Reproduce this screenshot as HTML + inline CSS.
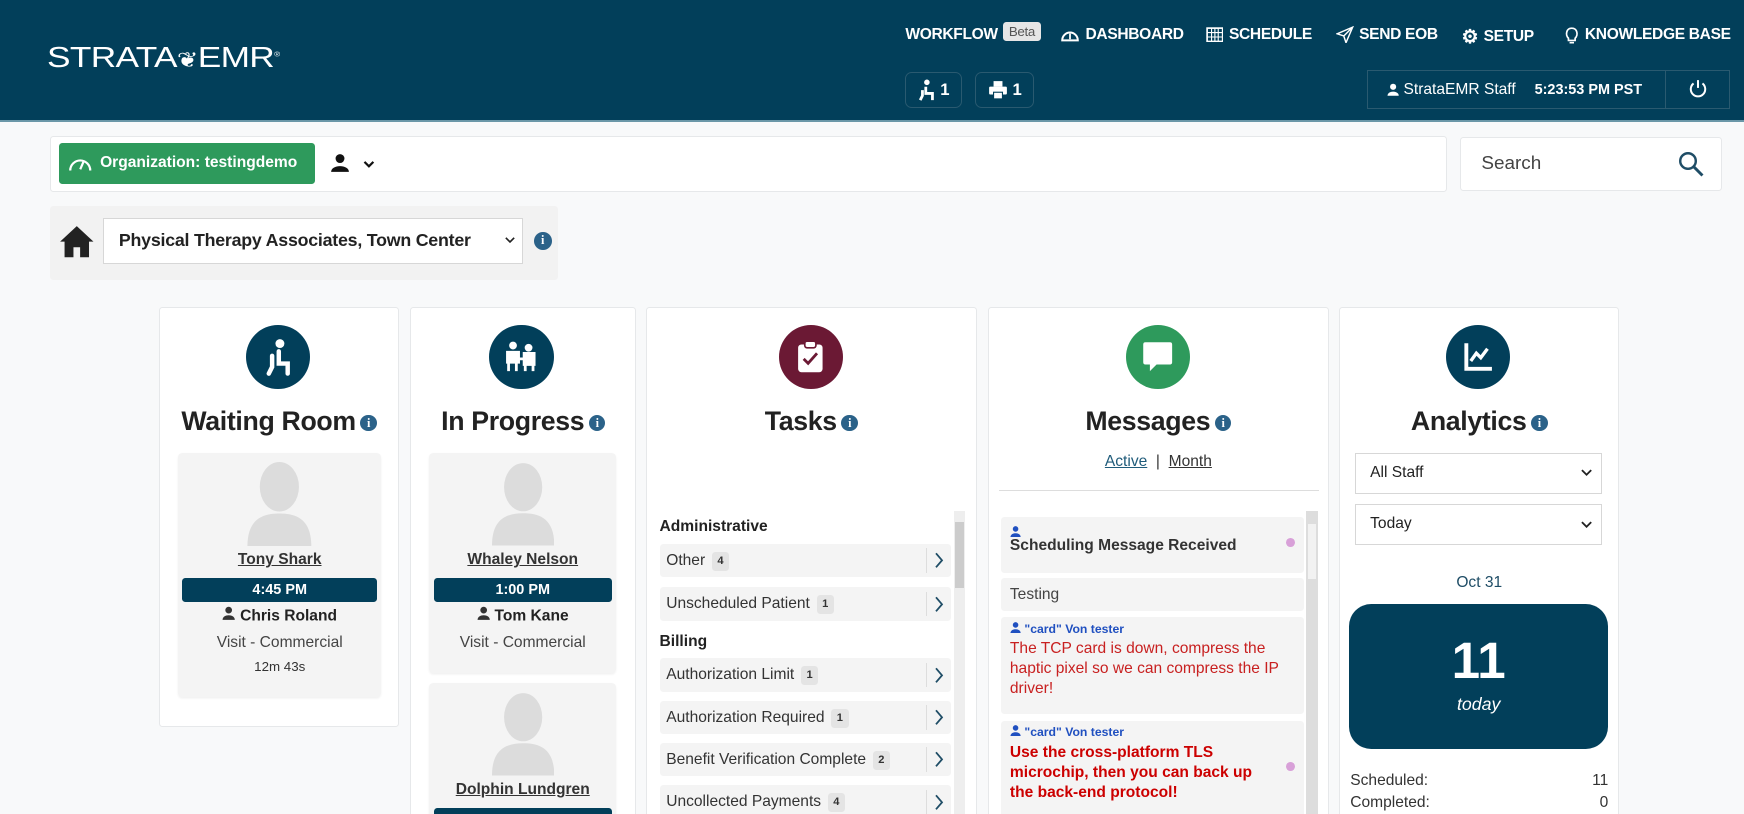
<!DOCTYPE html>
<html><head><meta charset="utf-8">
<style>
*{box-sizing:border-box;margin:0;padding:0}
html,body{width:1744px;height:814px;overflow:hidden}
body{background:#f8f9fa;font-family:"Liberation Sans",Arial,sans-serif;color:#222}
#root{zoom:1.11224;width:1568px;height:732px;position:relative;overflow:hidden}
.abs{position:absolute}
.hdr{left:0;top:0;width:1568px;height:110px;background:#023f5a;border-bottom:2px solid #6a97a8}
.nav{top:23px;color:#fff;font-weight:bold;font-size:14px;display:flex;align-items:center;gap:5px;letter-spacing:-0.3px}
.beta{background:#e6e6e6;color:#555;font-weight:normal;font-size:12px;padding:2px 5px;border-radius:3px;margin-top:-6px}
.hbtn{top:65px;height:32px;border:1px solid #2a5a70;border-radius:6px;color:#fff;font-weight:bold;font-size:15px;display:flex;align-items:center;justify-content:center;gap:4px}
.card{background:#fff;border:1px solid #e6e8ea;border-radius:3px}
.circle{width:58px;height:58px;border-radius:50%;display:flex;align-items:center;justify-content:center}
.title{font-size:24px;font-weight:bold;color:#222;text-align:center;letter-spacing:-0.3px}
.info{display:inline-block;width:15px;height:15px;border-radius:50%;background:#2b6289;color:#fff;font-size:11px;font-weight:bold;text-align:center;line-height:15px;font-family:"Liberation Serif",serif;vertical-align:3px;margin-left:4px}
.pcard{background:#f4f4f4;border-radius:4px;text-align:center;box-shadow:0 1px 2px rgba(0,0,0,.06)}
.pname{font-size:14px;font-weight:bold;color:#333;text-decoration:underline}
.tbar{background:#023f5a;color:#fff;font-weight:bold;font-size:13px;border-radius:3px;height:22px;line-height:22px}
.row{position:absolute;left:593px;width:262px;height:30px;background:#f4f4f4;border-radius:3px;font-size:14px;color:#333;line-height:30px;padding-left:6px}
.badge{display:inline-block;background:#e4e4e4;font-size:10px;font-weight:bold;padding:0 5px;line-height:17px;border-radius:3px;margin-left:6px;vertical-align:1px}
.chev{position:absolute;right:0;top:4px;height:22px;width:22px;border-left:1px solid #ddd;display:flex;align-items:center;justify-content:center}
.sel{background:#fff;border:1px solid #d7d7d7;font-size:14px;color:#222;padding-left:13px;display:flex;align-items:center}
.msg{position:absolute;left:900px;width:272px;background:#f4f4f4;border-radius:3px;padding:4px 8px;font-size:13px}
</style></head><body><div id="root">
<svg width="0" height="0" style="position:absolute"><defs>
<symbol id="chv" viewBox="0 0 10 16"><path d="M2 1 L8 8 L2 15" fill="none" stroke="#1f4d66" stroke-width="1.8"/></symbol>
<symbol id="dn" viewBox="0 0 12 8"><path d="M1 1 L6 6 L11 1" fill="none" stroke="#222" stroke-width="2"/></symbol>
<symbol id="usr" viewBox="0 0 12 12"><circle cx="6" cy="3.2" r="3" /><path d="M0.5 12 C0.5 6.5 11.5 6.5 11.5 12 Z"/></symbol>
</defs></svg>

<div class="abs hdr"></div>
<div class="abs" style="left:42px;top:38px;color:#fff;font-size:26px;letter-spacing:-0.5px;font-weight:normal;transform:scaleX(1.22);transform-origin:left">STRATA<span style="font-size:19px">❦</span>EMR<sup style="font-size:6px">®</sup></div>

<div class="abs nav" style="left:814px">WORKFLOW <span class="beta">Beta</span></div>
<div class="abs nav" style="left:953px"><svg width="18" height="14" viewBox="0 0 18 14"><path d="M2 12 A7 7 0 1 1 16 12 Z" fill="none" stroke="#fff" stroke-width="1.8"/><path d="M9 11 L9 6" stroke="#fff" stroke-width="1.6"/></svg>DASHBOARD</div>
<div class="abs nav" style="left:1084px"><svg width="16" height="14" viewBox="0 0 16 14"><rect x="1" y="1" width="14" height="12" fill="none" stroke="#fff" stroke-width="1.5"/><path d="M1 5H15M1 9H15M5 1V13M8 1V13M11 1V13" stroke="#fff" stroke-width="1"/></svg>SCHEDULE</div>
<div class="abs nav" style="left:1201px"><svg width="16" height="16" viewBox="0 0 16 16"><path d="M15 1 L1 7 L7 9 L9 15 Z M15 1 L7 9" fill="none" stroke="#fff" stroke-width="1.3"/></svg>SEND EOB</div>
<div class="abs nav" style="left:1314px"><span style="font-size:17px">⚙</span>SETUP</div>
<div class="abs nav" style="left:1406px"><svg width="14" height="17" viewBox="0 0 14 17"><path d="M4 11 C1 8 2 2 7 2 C12 2 13 8 10 11 L10 13 L4 13 Z M5 15 H9" fill="none" stroke="#fff" stroke-width="1.5"/></svg>KNOWLEDGE BASE</div>

<div class="abs hbtn" style="left:814px;width:51px"><svg width="16" height="20" viewBox="0 0 16 20"><circle cx="8" cy="3" r="2.5" fill="#fff"/><path d="M7 7 V13 H13 V19 M4 10 V15 L2 19" fill="none" stroke="#fff" stroke-width="2.5"/></svg>1</div>
<div class="abs hbtn" style="left:877px;width:53px"><svg width="18" height="18" viewBox="0 0 18 18"><rect x="5" y="1" width="8" height="5" fill="#fff"/><rect x="1" y="6" width="16" height="7" rx="1" fill="#fff"/><rect x="5" y="11" width="8" height="6" fill="#fff" stroke="#023f5a"/></svg>1</div>
<div class="abs" style="left:1229px;top:63px;width:326px;height:35px;border:1px solid #2a5a70;display:flex;align-items:center;color:#fff;font-size:14px">
<svg style="margin-left:17px;margin-right:4px" width="11" height="12" fill="#fff"><use href="#usr"/></svg>StrataEMR Staff<b style="margin-left:17px;font-size:13px">5:23:53 PM PST</b>
<div style="position:absolute;left:267px;top:0;height:33px;border-left:1px solid #2a5a70;width:58px;display:flex;align-items:center;justify-content:center"><svg width="18" height="18" viewBox="0 0 18 18"><path d="M5 4 A6.5 6.5 0 1 0 13 4" fill="none" stroke="#fff" stroke-width="1.8"/><path d="M9 1 V8" stroke="#fff" stroke-width="1.8"/></svg></div></div>

<div class="abs card" style="left:45px;top:122px;width:1256px;height:51px"></div>
<div class="abs" style="left:53px;top:129px;width:230px;height:36px;background:#2e9a5c;border-radius:3px;color:#fff;font-weight:bold;font-size:14px;display:flex;align-items:center;padding-left:8px;gap:7px"><svg width="22" height="14" viewBox="0 0 22 14"><path d="M2 13 A9 9 0 0 1 20 13" fill="none" stroke="#fff" stroke-width="2"/><path d="M11 12 L14 5" stroke="#fff" stroke-width="2"/></svg>Organization: testingdemo</div>
<div class="abs" style="left:297px;top:138px"><svg width="46" height="18" viewBox="0 0 46 18"><circle cx="9" cy="5" r="4" fill="#111"/><path d="M1 17 C1 10 17 10 17 17 Z" fill="#111"/><path d="M31 8 L35 12 L39 8" fill="none" stroke="#111" stroke-width="2"/></svg></div>
<div class="abs card" style="left:1313px;top:123px;width:235px;height:49px;display:flex;align-items:center;padding-left:18px;font-size:17px;color:#444">Search
<svg style="position:absolute;right:14px;top:12px" width="24" height="24" viewBox="0 0 24 24"><circle cx="9" cy="9" r="7" fill="none" stroke="#1f4d66" stroke-width="2.2"/><path d="M14 14 L22 22" stroke="#1f4d66" stroke-width="2.6"/></svg></div>

<div class="abs" style="left:45px;top:185px;width:457px;height:67px;background:#f2f2f2;border-radius:3px"></div>
<div class="abs" style="left:53px;top:202px"><svg width="32" height="30" viewBox="0 0 32 30"><path d="M16 1 L31 15 H27 V29 H19 V20 H13 V29 H5 V15 H1 Z" fill="#222"/></svg></div>
<div class="abs sel" style="left:93px;top:196px;width:377px;height:41px;font-weight:bold;font-size:16px;letter-spacing:-0.2px">Physical Therapy Associates, Town Center<svg style="position:absolute;right:6px" width="9" height="6"><use href="#dn"/></svg></div>
<div class="abs" style="left:476px;top:208px"><span class="info" style="width:16px;height:16px">i</span></div>

<!-- columns -->
<div class="abs card" style="left:143px;top:276px;width:216px;height:378px"></div>
<div class="abs card" style="left:369px;top:276px;width:203px;height:470px"></div>
<div class="abs card" style="left:581px;top:276px;width:297px;height:470px"></div>
<div class="abs card" style="left:888px;top:276px;width:307px;height:470px"></div>
<div class="abs card" style="left:1204px;top:276px;width:252px;height:470px"></div>

<div class="abs circle" style="left:221px;top:292px;background:#023f5a"><svg width="30" height="34" viewBox="0 0 30 34"><circle cx="17" cy="5" r="4" fill="#fff"/><path d="M16 12 V23 H24 V32 M10 16 V26 L7 32" fill="none" stroke="#fff" stroke-width="4" stroke-linecap="round"/></svg></div>
<div class="abs circle" style="left:440px;top:292px;background:#023f5a"><svg width="34" height="30" viewBox="0 0 34 30"><circle cx="9" cy="5" r="3.5" fill="#fff"/><circle cx="23" cy="7" r="3.5" fill="#fff"/><path d="M4 11 H14 V20 H4 Z M5 20 V28 M12 20 V28 M19 12 H28 V22 H19 Z M20 22 V28 M27 22 V28 M12 17 H24" stroke="#fff" stroke-width="2.5" fill="#fff"/></svg></div>
<div class="abs circle" style="left:700px;top:292px;background:#6b1934"><svg width="24" height="30" viewBox="0 0 24 30"><rect x="1" y="4" width="22" height="25" rx="3" fill="#fff"/><rect x="7" y="1" width="10" height="6" rx="2" fill="#fff" stroke="#6b1934" stroke-width="1.5"/><path d="M6 17 L10 21 L18 12" fill="none" stroke="#6b1934" stroke-width="2.5"/></svg></div>
<div class="abs circle" style="left:1012px;top:292px;background:#2e9a5c"><svg width="30" height="30" viewBox="0 0 30 30"><path d="M4 2 H26 Q28 2 28 4 V20 Q28 22 26 22 H14 L8 28 V22 H4 Q2 22 2 20 V4 Q2 2 4 2 Z" fill="#fff"/></svg></div>
<div class="abs circle" style="left:1300px;top:292px;background:#023f5a"><svg width="28" height="28" viewBox="0 0 28 28"><path d="M3 2 V25 H26" fill="none" stroke="#fff" stroke-width="3.5"/><path d="M7 18 L12 11 L16 15 L22 7" fill="none" stroke="#fff" stroke-width="3"/></svg></div>

<div class="abs title" style="left:143px;top:365px;width:216px">Waiting Room<span class="info">i</span></div>
<div class="abs title" style="left:369px;top:365px;width:203px">In Progress<span class="info">i</span></div>
<div class="abs title" style="left:581px;top:365px;width:297px">Tasks<span class="info">i</span></div>
<div class="abs title" style="left:888px;top:365px;width:307px">Messages<span class="info">i</span></div>
<div class="abs title" style="left:1204px;top:365px;width:252px">Analytics<span class="info">i</span></div>

<!-- waiting room card -->
<div class="abs pcard" style="left:160px;top:407px;width:183px;height:220px">
<svg style="margin-top:8px" width="60" height="76" viewBox="0 0 62 82"><ellipse cx="31" cy="24" rx="19" ry="24" fill="#dcdcdc"/><path d="M0 82 C0 55 15 50 31 50 C47 50 62 55 62 82 Z" fill="#dcdcdc"/></svg>
<div class="pname" style="margin-top:0px">Tony Shark</div>
<div class="tbar" style="margin:8px 4px 0 4px">4:45 PM</div>
<div style="font-weight:bold;font-size:14px;margin-top:3px"><svg width="12" height="13" fill="#333"><use href="#usr"/></svg> Chris Roland</div>
<div style="font-size:14px;color:#444;margin-top:8px">Visit - Commercial</div>
<div style="font-size:12px;color:#333;margin-top:6px">12m 43s</div>
</div>

<div class="abs pcard" style="left:386px;top:407px;width:168px;height:198px">
<svg style="margin-top:8px" width="56" height="76" viewBox="0 0 62 82"><ellipse cx="31" cy="24" rx="19" ry="24" fill="#dcdcdc"/><path d="M0 82 C0 55 15 50 31 50 C47 50 62 55 62 82 Z" fill="#dcdcdc"/></svg>
<div class="pname" style="margin-top:0px">Whaley Nelson</div>
<div class="tbar" style="margin:8px 4px 0 4px">1:00 PM</div>
<div style="font-weight:bold;font-size:14px;margin-top:3px"><svg width="12" height="13" fill="#333"><use href="#usr"/></svg> Tom Kane</div>
<div style="font-size:14px;color:#444;margin-top:8px">Visit - Commercial</div>
</div>
<div class="abs pcard" style="left:386px;top:614px;width:168px;height:140px">
<svg style="margin-top:8px" width="56" height="76" viewBox="0 0 62 82"><ellipse cx="31" cy="24" rx="19" ry="24" fill="#dcdcdc"/><path d="M0 82 C0 55 15 50 31 50 C47 50 62 55 62 82 Z" fill="#dcdcdc"/></svg>
<div class="pname" style="margin-top:0px">Dolphin Lundgren</div>
<div class="tbar" style="margin:8px 4px 0 4px"></div>
</div>

<!-- tasks -->
<div class="abs" style="left:858px;top:459px;width:10px;height:280px;background:#eee"><div style="margin-top:10px;height:60px;background:#ccc;width:8px;margin-left:1px"></div></div>
<div class="abs" style="left:593px;top:466px;font-weight:bold;font-size:14px">Administrative</div>
<div class="row" style="top:489px">Other<span class="badge">4</span><span class="chev"><svg width="9" height="15"><use href="#chv"/></svg></span></div>
<div class="row" style="top:528px">Unscheduled Patient<span class="badge">1</span><span class="chev"><svg width="9" height="15"><use href="#chv"/></svg></span></div>
<div class="abs" style="left:593px;top:569px;font-weight:bold;font-size:14px">Billing</div>
<div class="row" style="top:592px">Authorization Limit<span class="badge">1</span><span class="chev"><svg width="9" height="15"><use href="#chv"/></svg></span></div>
<div class="row" style="top:630px">Authorization Required<span class="badge">1</span><span class="chev"><svg width="9" height="15"><use href="#chv"/></svg></span></div>
<div class="row" style="top:668px">Benefit Verification Complete<span class="badge">2</span><span class="chev"><svg width="9" height="15"><use href="#chv"/></svg></span></div>
<div class="row" style="top:706px">Uncollected Payments<span class="badge">4</span><span class="chev"><svg width="9" height="15"><use href="#chv"/></svg></span></div>

<!-- messages -->
<div class="abs" style="left:888px;top:407px;width:307px;text-align:center;font-size:14px;color:#333"><span style="color:#1f5b7a;text-decoration:underline">Active</span> &nbsp;|&nbsp; <span style="text-decoration:underline">Month</span></div>
<div class="abs" style="left:898px;top:441px;width:288px;border-top:1px solid #ddd"></div>
<div class="abs" style="left:1174px;top:459px;width:11px;height:280px;background:#ddd"><div style="margin-top:12px;height:50px;background:#f2f2f2;width:7px;margin-left:2px"></div></div>
<div class="msg" style="top:465px;height:50px"><div style="height:14px;padding-top:3px"><svg width="10" height="10" fill="#2050c0"><use href="#usr"/></svg></div><b style="color:#333;font-size:14px">Scheduling Message Received</b><span style="position:absolute;right:8px;top:19px;width:8px;height:8px;border-radius:50%;background:#d8a0d8"></span></div>
<div class="msg" style="top:520px;height:29px;font-size:14px;color:#444;line-height:21px">Testing</div>
<div class="msg" style="top:555px;height:87px"><div style="color:#2050c0;font-size:11px;font-weight:bold"><svg width="10" height="10" fill="#2050c0"><use href="#usr"/></svg> "card" Von tester</div><div style="color:#c82020;font-size:14px;line-height:18px;margin-top:3px">The TCP card is down, compress the haptic pixel so we can compress the IP driver!</div></div>
<div class="msg" style="top:648px;height:90px"><div style="color:#2050c0;font-size:11px;font-weight:bold"><svg width="10" height="10" fill="#2050c0"><use href="#usr"/></svg> "card" Von tester</div><div style="color:#c00;font-size:14px;line-height:18px;margin-top:3px;font-weight:bold;width:230px">Use the cross-platform TLS microchip, then you can back up the back-end protocol!</div><span style="position:absolute;right:8px;top:37px;width:8px;height:8px;border-radius:50%;background:#d8a0d8"></span></div>

<!-- analytics -->
<div class="abs sel" style="left:1218px;top:407px;width:222px;height:37px">All Staff<svg style="position:absolute;right:8px" width="10" height="7"><use href="#dn"/></svg></div>
<div class="abs sel" style="left:1218px;top:453px;width:222px;height:37px">Today<svg style="position:absolute;right:8px" width="10" height="7"><use href="#dn"/></svg></div>
<div class="abs" style="left:1204px;top:516px;width:252px;text-align:center;font-size:14px;color:#1f4d66">Oct 31</div>
<div class="abs" style="left:1213px;top:543px;width:233px;height:130px;background:#023f5a;border-radius:20px;color:#fff;text-align:center">
<div style="font-size:46px;font-weight:bold;margin-top:27px;line-height:48px">11</div>
<div style="font-size:16px;font-style:italic;margin-top:6px">today</div></div>
<div class="abs" style="left:1214px;top:692px;width:232px;font-size:14px;color:#333;line-height:20px">
<div style="display:flex;justify-content:space-between"><span>Scheduled:</span><span>11</span></div>
<div style="display:flex;justify-content:space-between"><span>Completed:</span><span>0</span></div></div>

</div></body></html>
